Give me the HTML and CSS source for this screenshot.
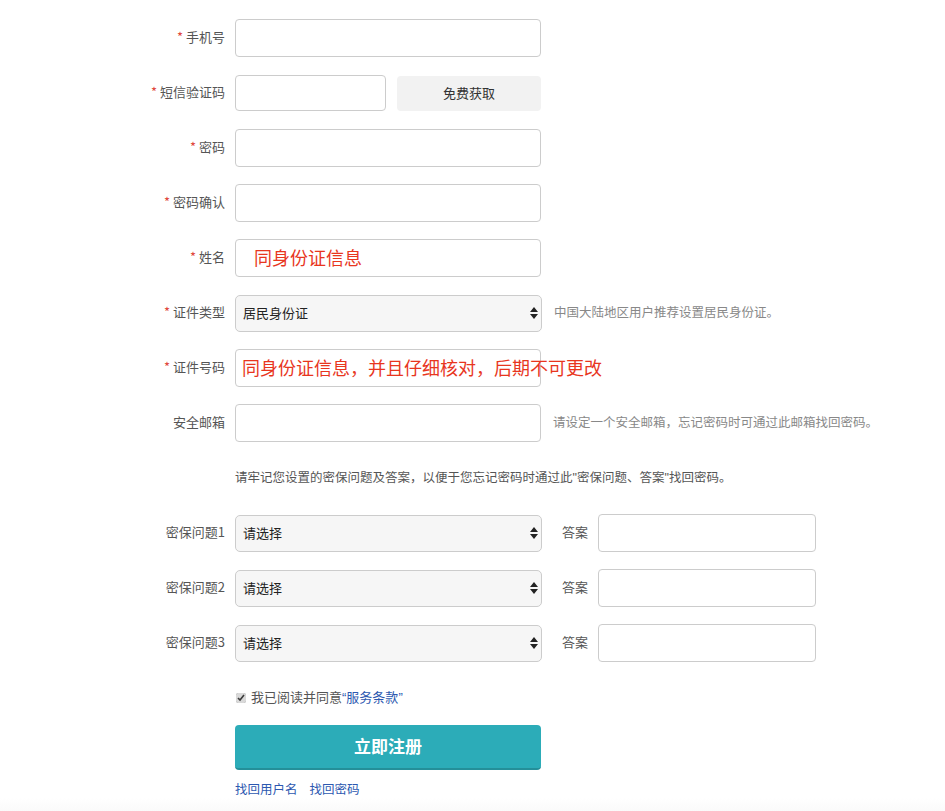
FILE: index.html
```html
<!DOCTYPE html>
<html lang="zh-CN">
<head>
    <meta charset="UTF-8">
    <meta name="viewport" content="width=device-width, initial-scale=1.0">
    <title>用户注册</title>
    <link rel="stylesheet" href="styles.css">
</head>
<body>
    <form class="reg-form" onsubmit="return false;">
        <div class="form-row">
            <label class="form-label"><span class="req">*</span>手机号</label>
            <input class="text-input" type="text">
        </div>
        <div class="form-row">
            <label class="form-label"><span class="req">*</span>短信验证码</label>
            <input class="text-input code-input" type="text">
            <button class="code-btn" type="button">免费获取</button>
        </div>
        <div class="form-row">
            <label class="form-label"><span class="req">*</span>密码</label>
            <input class="text-input" type="password">
        </div>
        <div class="form-row">
            <label class="form-label"><span class="req">*</span>密码确认</label>
            <input class="text-input" type="password">
        </div>
        <div class="form-row">
            <label class="form-label"><span class="req">*</span>姓名</label>
            <div class="field">
                <input class="text-input" type="text">
                <span class="field-tip tip-name">同身份证信息</span>
            </div>
        </div>
        <div class="form-row">
            <label class="form-label"><span class="req">*</span>证件类型</label>
            <div class="select-box">
                <select class="select-input">
                    <option>居民身份证</option>
                    <option>护照</option>
                </select>
                <svg class="select-arrow" width="8" height="12" viewBox="0 0 8 12"><path d="M4 0 L8 5 L0 5 Z M0 7 L8 7 L4 12 Z" fill="#222"/></svg>
            </div>
            <span class="hint">中国大陆地区用户推荐设置居民身份证。</span>
        </div>
        <div class="form-row">
            <label class="form-label"><span class="req">*</span>证件号码</label>
            <div class="field">
                <input class="text-input" type="text">
                <span class="field-tip tip-id">同身份证信息，并且仔细核对，后期不可更改</span>
            </div>
        </div>
        <div class="form-row">
            <label class="form-label">安全邮箱</label>
            <input class="text-input" type="text">
            <span class="hint">请设定一个安全邮箱，忘记密码时可通过此邮箱找回密码。</span>
        </div>
        <div class="form-row">
            <span class="form-label"></span>
            <p class="note">请牢记您设置的密保问题及答案，以便于您忘记密码时通过此<span class="latin">"</span>密保问题、答案<span class="latin">"</span>找回密码。</p>
        </div>
        <div class="form-row">
            <label class="form-label">密保问题1</label>
            <div class="select-box">
                <select class="select-input"><option>请选择</option></select>
                <svg class="select-arrow" width="8" height="12" viewBox="0 0 8 12"><path d="M4 0 L8 5 L0 5 Z M0 7 L8 7 L4 12 Z" fill="#222"/></svg>
            </div>
            <label class="answer-label">答案</label>
            <input class="text-input answer-input" type="text">
        </div>
        <div class="form-row">
            <label class="form-label">密保问题2</label>
            <div class="select-box">
                <select class="select-input"><option>请选择</option></select>
                <svg class="select-arrow" width="8" height="12" viewBox="0 0 8 12"><path d="M4 0 L8 5 L0 5 Z M0 7 L8 7 L4 12 Z" fill="#222"/></svg>
            </div>
            <label class="answer-label">答案</label>
            <input class="text-input answer-input" type="text">
        </div>
        <div class="form-row">
            <label class="form-label">密保问题3</label>
            <div class="select-box">
                <select class="select-input"><option>请选择</option></select>
                <svg class="select-arrow" width="8" height="12" viewBox="0 0 8 12"><path d="M4 0 L8 5 L0 5 Z M0 7 L8 7 L4 12 Z" fill="#222"/></svg>
            </div>
            <label class="answer-label">答案</label>
            <input class="text-input answer-input" type="text">
        </div>
        <div class="form-row agree-row">
            <span class="form-label"></span>
            <label class="agree">
                <input type="checkbox" checked>
                <span>我已阅读并同意<a href="#"><span class="latin">“</span>服务条款<span class="latin">”</span></a></span>
            </label>
        </div>
        <div class="form-row submit-row">
            <span class="form-label"></span>
            <button class="submit-btn" type="submit">立即注册</button>
        </div>
        <div class="form-row links-row">
            <span class="form-label"></span>
            <a class="find-link" href="#">找回用户名</a>
            <a class="find-link" href="#">找回密码</a>
        </div>
    </form>
    <div class="page-bottom"></div>
</body>
</html>
```

FILE: styles.css
```css
/* Styling */
body {
    margin: 0;
    background-color: #fff;
    color: #555;
    font-family: "Noto Sans CJK SC", "Liberation Sans", sans-serif;
    font-size: 13px;
}

.latin {
    font-family: "Liberation Sans", sans-serif;
}

.reg-form {
    padding-top: 19px;
}

.form-row {
    display: flex;
    align-items: center;
    height: 38px;
    margin-bottom: 17px;
}

.form-label {
    width: 225px;
    margin-right: 10px;
    padding-bottom: 3px;
    text-align: right;
    color: #555;
    flex-shrink: 0;
    box-sizing: border-box;
}

.req {
    color: #e0473d;
    margin-right: 3px;
}

.text-input {
    width: 306px;
    height: 38px;
    box-sizing: border-box;
    border: 1px solid #ccc;
    border-radius: 4px;
    padding: 0 8px;
    font-size: 14px;
    outline: none;
    background: #fff;
}

.code-input {
    width: 151px;
    height: 36px;
}

.code-btn {
    width: 144px;
    height: 35px;
    margin-left: 11px;
    padding-bottom: 2px;
    border: none;
    border-radius: 4px;
    background-color: #f2f2f2;
    color: #333;
    font-family: inherit;
    font-size: 13px;
}

.field {
    position: relative;
    height: 38px;
}

.field-tip {
    position: absolute;
    top: 50%;
    transform: translateY(-55%);
    color: #e8361e;
    font-size: 18px;
    white-space: nowrap;
    pointer-events: none;
}

.tip-name {
    left: 19px;
}

.tip-id {
    left: 7px;
}

.select-box {
    position: relative;
    height: 37px;
}

.select-input {
    appearance: none;
    -webkit-appearance: none;
    width: 307px;
    height: 37px;
    box-sizing: border-box;
    border: 1px solid #ccc;
    border-radius: 5px;
    background-color: #f6f6f6;
    padding: 0 7px 2px;
    color: #222;
    font-family: inherit;
    font-size: 13px;
    outline: none;
}

.select-arrow {
    position: absolute;
    right: 4px;
    top: 12px;
    pointer-events: none;
}

.hint {
    margin-left: 12px;
    padding-bottom: 3px;
    color: #888;
    font-size: 12.5px;
}

.note {
    margin: 0;
    padding-bottom: 3px;
    color: #555;
    font-size: 12.5px;
}

.answer-label {
    margin-left: 20px;
    margin-right: 10px;
    padding-bottom: 3px;
    color: #555;
}

.answer-input {
    width: 218px;
}

.agree-row {
    margin-bottom: 8px;
}

.agree {
    display: flex;
    align-items: center;
    color: #555;
}

.agree input {
    width: 10px;
    height: 10px;
    margin: 0 5px 0 1px;
    accent-color: #d9d9d9;
}

.agree span {
    padding-bottom: 3px;
}

.agree a {
    color: #2c58b0;
    text-decoration: none;
}

.submit-row {
    height: 44px;
    margin-bottom: 9px;
}

.submit-btn {
    width: 306px;
    height: 45px;
    padding-bottom: 3px;
    border: none;
    border-bottom: 2px solid #248f99;
    border-radius: 4px;
    background-color: #2cacb8;
    color: #fff;
    font-family: inherit;
    font-size: 17px;
    font-weight: bold;
}

.links-row {
    height: 20px;
    margin-bottom: 0;
}

.find-link {
    color: #2c58b0;
    text-decoration: none;
    margin-right: 12px;
    font-size: 12.5px;
}

.page-bottom {
    height: 40px;
    background: linear-gradient(#fff, #f1f1f1);
}
```
